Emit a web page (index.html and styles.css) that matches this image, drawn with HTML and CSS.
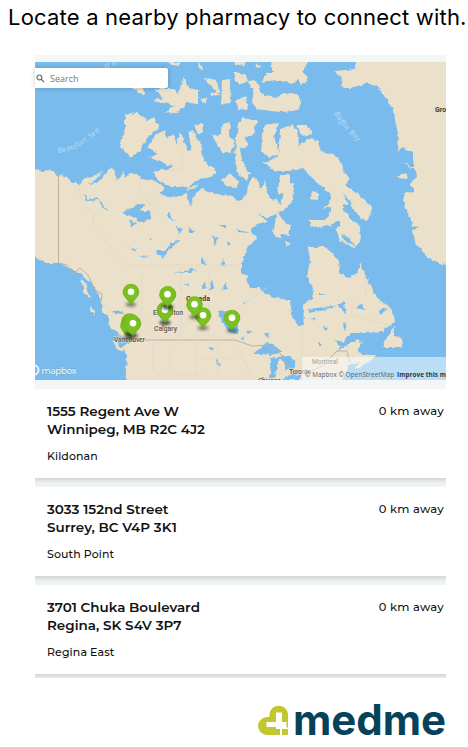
FILE: index.html
```html
<!DOCTYPE html>
<html lang="en">
<head>
<meta charset="utf-8">
<title>Pharmacy locator</title>
<link rel="stylesheet" href="styles.css">
</head>
<body>
<h1 class="title">Locate a nearby pharmacy to connect with.</h1>
<main class="locator">
  <section class="map-panel">
    <svg class="map" viewBox="35 62 411 318" role="img" aria-label="Map of Canada">
      <defs>
        <filter id="coast" filterUnits="userSpaceOnUse" x="25" y="52" width="431" height="338">
          <feTurbulence type="fractalNoise" baseFrequency=".2" numOctaves="2" seed="8"/>
          <feDisplacementMap in="SourceGraphic" scale="4.5" xChannelSelector="R" yChannelSelector="G"/>
        </filter>
        <filter id="soft" x="-50%" y="-100%" width="200%" height="300%"><feGaussianBlur stdDeviation="1.5"/></filter>
        <radialGradient id="green" cx=".5" cy=".4" r=".65"><stop offset="0" stop-color="#83c72b"/><stop offset=".65" stop-color="#77bc20"/><stop offset="1" stop-color="#529817"/></radialGradient>
        <g id="pin">
          <ellipse class="pin-shadow" cx="0" cy="12" rx="5.5" ry="2.2"/>
          <path fill="url(#green)" d="M0 13C-1 9 -8.300 5 -8.300 -.5A8.300 8.300 0 0 1 8.300 -.5C8.300 5 1 9 0 13Z"/>
          <circle cy="-.7" r="3.3" fill="#fff"/>
        </g>
      </defs>
      <rect class="water" x="35" y="62" width="411" height="318"/>
      <g filter="url(#coast)">
        <g class="land">
          <path d="M25 169L43 171 50 169 58 175 66 176 72 182 80 185 82 179 91 177 104 171 97 178 89 184 98 182 105 174 112 166 115 175 118 179 122 177 123 170 125 178 130 173 138 175 142 179 155 181 164 187 160 195 177 197 187 193 190 207 193 197 202 188 210 193 230 196 239 201 245 197 249 183 253 177 259 182 260 190 265 180 268 193 272 202 277 197 280 175 290 175 290 183 294 185 293 200 287 208 278 213 268 218 257 213 267 221 255 225 251 232 257 238 248 247 242 262 242 272 247 277 250 288 258 287 270 296 290 301 291 315 300 327 304 325 303 305 312 298 314 288 307 277 310 260 308 247 325 247 332 253 339 260 340 273 350 278 357 273 360 263 367 278 372 290 382 302 393 310 395 322 382 331 368 333 352 333 342 343 337 352 345 346 358 339 362 343 357 350 362 355 377 355 368 362 358 369 355 367 360 362 350 364 345 373 338 390 125 390 127 353 122 347 130 343 110 327 108 317 102 310 100 297 90 282 80 273 72 270 60 263 45 263 35 257 25 250Z"/>
          <path d="M356 50L355 69 335 71 343 78 341 86 350 88 367 83 378 87 387 100 394 112 395 120 398 133 397 153 402 147 412 152 414 167 402 162 416 170 417 177 410 183 415 192 405 193 403 200 407 210 412 223 415 242 427 257 442 265 456 260 456 50Z"/>
          <path d="M125 115L137 113 147 120 155 118 159 127 147 138 140 152 130 157 120 147 125 130Z"/>
          <path d="M147 147L157 134 165 130 167 138 173 134 177 144 180 130 188 151 192 150 188 132 194 131 202 147 203 160 217 172 210 177 200 179 187 187 170 187 157 180 154 172 174 167 150 158 158 153Z"/>
          <path d="M194 125L202 124 203 132 198 134ZM211 134L219 137 223 124 230 122 229 135 235 143 230 153 222 152 217 144Z"/>
          <path d="M152 101L163 98 155 89 173 88 178 94 184 76 189 88 198 90 198 104 188 103 176 113 165 112 174 105ZM131 87L145 96 142 88 159 83 151 76 140 76ZM168 62H180L179 66 172 65ZM198 61L203 70 199 69ZM204 78L220 96 217 80ZM201 100L206 105 206 97ZM222 80L230 79 231 103 221 104ZM210 93L218 92 219 95 212 96Z"/>
          <path d="M235 72L245 74 248 81 240 85 235 80ZM236 100L246 97 248 109 237 110ZM234 60H247L244 66 235 64ZM256 62L260 67 257 68ZM270 60H308L306 66 302 71 308 77 302 85 298 80 295 84 286 82 276 80 261 82 267 72 274 72Z"/>
          <path d="M248 81L256 80 261 94 276 98 285 93 298 94 301 103 298 110 283 112 270 111 257 109 251 101 253 91Z"/>
          <path d="M238 122L244 118 257 121 253 135 245 138 248 146 240 149 242 160 250 173 247 180 238 174 235 160 236 140Z"/>
          <path d="M265 125L279 123 274 136 279 154 269 158 261 151 262 138ZM297 125L307 125 313 134 302 136Z"/>
          <path d="M263 162L271 160 278 157 279 147 280 130 292 124 297 131 299 145 307 139 317 140 321 151 333 154 341 162 344 170 349 180 345 184 362 197 373 208 368 218 361 219 351 207 350 202 343 205 343 215 329 207 322 209 330 203 331 195 315 181 303 168 289 171 275 171Z"/>
          <path d="M312 191L318 192 318 200 310 199ZM277 212L284 221 291 226 289 235 282 234 280 239 273 234ZM285 242L291 243 287 247ZM308 220L326 220 332 209 345 210 350 218 360 226 361 239 355 248 340 241 335 227 324 226 313 228Z"/>
          <path d="M222 181L230 173 238 180 237 188 225 185ZM185 189L199 184 193 190ZM357 205L370 204 367 221 361 218ZM394 326L394 336 402 338 403 347 382 347 389 335Z"/>
          <path d="M80 277L87 285 90 299 84 292ZM92 306L95 316 90 310ZM112 340L124 349 119 351ZM397 176L405 173 408 178 402 180Z"/>
        </g>
        <g class="lakes">
          <path d="M122 213L135 205 145 204 140 211 150 211 151 219 140 222 134 217ZM128 219L136 223 133 227ZM155 251L165 251 171 243 182 240 169 249 163 258ZM127 247L135 249 138 252ZM139 255L151 256 142 257ZM149 237L153 240 150 240ZM172 275L190 269 198 271 180 273ZM169 212L174 221 167 216ZM177 227L183 229 178 234ZM190 227L194 233 188 233ZM213 235L218 239 214 246ZM227 241L232 245 228 246Z"/>
          <path d="M203 256L206 266 202 263ZM212 279L214 288 208 291ZM222 259L226 267 221 266ZM204 281L207 288 203 289ZM226 282L228 289 222 290ZM217 312L227 311 229 319 238 321 238 334 229 332 223 323ZM112 311L122 311 123 314 114 313ZM208 347L214 348 212 351ZM217 359L221 364 218 367ZM187 282L189 286 184 285ZM219 225L226 225 226 229Z"/>
          <path d="M253 354L267 342 282 351 272 355 260 354ZM271 358L280 357 277 366 274 379H270ZM277 357L292 356 296 367 286 370 284 362ZM282 380L294 372 299 374 287 381ZM290 379L301 374 300 379ZM240 339L244 337 243 342ZM246 330L253 333 248 334ZM264 334L269 334 268 338ZM308 309L325 307 326 310 309 313ZM320 307L335 306 331 309ZM337 305L344 302 346 315 341 309ZM356 308L361 304 365 310ZM343 322L347 325 344 331ZM323 326L328 327 325 331ZM319 342L322 345 318 346ZM335 340L344 342 339 346ZM319 292L325 295 319 295ZM378 311L389 307 380 314ZM312 318L316 318 313 321ZM241 303L246 302 243 305Z"/>
          <path d="M331 224L338 220 341 226 336 229ZM342 233L350 239 356 246 344 240ZM325 230L331 229 330 232ZM274 196L284 193 281 205ZM235 229L247 232 250 233 239 232ZM343 193L355 206 347 202ZM411 226L418 227 414 230ZM163 190L184 192 180 196 164 194Z"/>
          <path class="stream" d="M85 194L87 200H93L98 199 103 207 108 210"/>
        </g>
      </g>
      <g class="borders">
        <path class="line" d="M58.500 176V263L67 265 73 274 80 268 88 275 95 290 102 294 101 302M129 340H235L252 346 268 345 280 353 286 363 292 373 312 371 323 365 328 363M323 365L337 351H347L350 363"/>
        <path class="faint" d="M78 185L83 205 94 213 93 224 108 245 128 265H240M140 180V196L160 211M142 266V315L158 340M181 267V340M209 267V340M235 310L268 287M302 326V366M182 135V170L162 171M352 300V315L392 326M364 270L366 296M153 340V370L170 380M196 340V380M218 340V380M196 358H235M170 350V374H205M240 351L253 380"/>
      </g>
      <g class="sea-label">
        <path id="beaufort" fill="none" d="M58 153C72 151 88 144 103 127"/>
        <path id="baffin" fill="none" d="M334 113Q342 129 362 145"/>
        <text font-size="7.2"><textPath href="#beaufort" textLength="48">Beaufort Sea</textPath></text>
        <text font-size="7.5"><textPath href="#baffin" textLength="38">Baffin Bay</textPath></text>
        <text font-size="9" transform="translate(105 69) rotate(-18)" letter-spacing="3">an</text>
      </g>
      <g class="place">
        <text x="435" y="112" class="region">Gro</text>
        <text x="186" y="301" class="region" textLength="24">Canada</text>
        <text x="153" y="315" textLength="30">Edmonton</text>
        <text x="154" y="331" textLength="23">Calgary</text>
        <text x="114" y="342" textLength="31">Vancouver</text>
        <text x="312" y="364" textLength="26">Montreal</text>
        <text x="289" y="374" textLength="22">Toronto</text>
        <text x="258" y="383" textLength="23">Chicago</text>
      </g>
      <g>
        <use href="#pin" x="131" y="292.500"/><use href="#pin" x="165" y="311"/><use href="#pin" x="165" y="310.500"/><use href="#pin" x="168" y="295"/><use href="#pin" x="167.500" y="295"/>
        <use href="#pin" x="203" y="316"/><use href="#pin" x="194.500" y="305"/><use href="#pin" x="232" y="318.500"/>
        <use href="#pin" x="128.500" y="326"/><use href="#pin" x="129.500" y="322"/><use href="#pin" x="131" y="322.500"/><use href="#pin" x="133" y="324"/>
      </g>
      <g class="mapbox">
        <circle cx="34" cy="370" r="4.500"/><text x="41" y="373.500" textLength="36">mapbox</text>
      </g>
      <rect x="302" y="357" width="144" height="23" fill="#fff" opacity=".5"/>
      <g class="credit">
        <text x="305" y="377" textLength="89">© Mapbox © OpenStreetMap</text>
        <text x="397" y="377" textLength="49" class="improve">Improve this m</text>
      </g>
    </svg>
    <label class="search">
      <svg class="search-icon" viewBox="0 0 10 10"><circle cx="3.800" cy="3.800" r="2.700"/><path d="M5.800 5.800L9 9"/></svg>
      <span>Search</span>
    </label>
  </section>
  <article class="card">
    <div><h2 class="address">1555 Regent Ave W<br>Winnipeg, MB R2C 4J2</h2><p class="branch">Kildonan</p></div>
    <span class="distance">0 km away</span>
  </article>
  <article class="card">
    <div><h2 class="address">3033 152nd Street<br>Surrey, BC V4P 3K1</h2><p class="branch">South Point</p></div>
    <span class="distance">0 km away</span>
  </article>
  <article class="card last">
    <div><h2 class="address">3701 Chuka Boulevard<br>Regina, SK S4V 3P7</h2><p class="branch">Regina East</p></div>
    <span class="distance">0 km away</span>
  </article>
  <footer class="brand">
    <svg class="logo" viewBox="258 700 188 40" role="img" aria-label="medme">
      <path class="mark" d="M280 735H267A9 9 0 0 1 267 717H269.500V714A9.300 9.300 0 0 1 288 714V735H280Z"/>
      <path class="cross" d="M276 712.500H282V722H286.500V727.500H289V729H282V736H280V729H276V727H266.500V722H276Z"/>
      <text x="293" y="735" textLength="153">medme</text>
    </svg>
  </footer>
</main>
</body>
</html>
```
FILE: styles.css
```css
* { box-sizing: border-box; }
body { margin: 0; width: 468px; height: 747px; overflow: hidden; background: #fff; color: #111; font-family: Montserrat, Inter, sans-serif; }
.title { margin: 0; padding: 5px 0 0 8px; height: 55px; font: 400 22px/25px Inter, sans-serif; letter-spacing: .2px; color: #000; white-space: nowrap; }
.locator { width: 411px; margin-left: 35px; }
.map-panel { position: relative; padding: 7px 0 9px; background: #f2f6f7; }
.map { display: block; width: 411px; height: 318px; font-family: "Open Sans", sans-serif; }
.water { fill: #78bbec; }
.land { fill: #ebe1ca; }
.lakes { fill: #78bbec; }
.stream { fill: none; stroke: #78bbec; stroke-width: 1.3; }
.line { fill: none; stroke: #bdb1a5; stroke-width: 1; }
.faint { fill: none; stroke: #ddd3c3; stroke-width: .6; }
.sea-label { fill: #c0def4; font-style: italic; }
.place { font: 500 6.8px Roboto, sans-serif; fill: #55514d; stroke: #f2eadb; stroke-width: .8px; paint-order: stroke; }
.region { font-weight: 700; font-size: 7px; fill: #383634; }
.pin-shadow { fill: #222; opacity: .55; filter: url(#soft); }
.mapbox { font: 600 9.5px Montserrat, Inter, sans-serif; fill: #d9ebf6; stroke: #6d98b2; stroke-width: .6px; paint-order: stroke; }
.mapbox circle { fill: none; stroke: #e7f2f9; stroke-width: 2; }
.credit { font-size: 6.3px; fill: #55616b; }
.improve { font-weight: 700; fill: #293743; }
.search { position: absolute; left: 0; top: 13px; width: 133px; height: 20px; display: flex; align-items: center; gap: 5px; background: #fff; border-radius: 0 2px 2px 0; box-shadow: 0 0 5px rgba(0,0,0,.22); color: #777; font: 9px "Open Sans", sans-serif; }
.search-icon { width: 9px; height: 9px; margin-left: 1px; fill: none; stroke: #666; stroke-width: 1.3; }
.card { display: flex; justify-content: space-between; height: 98px; padding: 13px 2px 0 12px; background: linear-gradient(#fff 89px, #d2d6d7 89px, #dce0e1 91px, #edf1f2 94px, #f0f4f5 98px); }
.card.last { height: 93px; }
.address { margin: 0; font-size: 13.5px; line-height: 18px; font-weight: 600; letter-spacing: 0; white-space: nowrap; }
.branch { margin: 11px 0 0; font-size: 11px; line-height: 14px; font-weight: 500; letter-spacing: .1px; }
.distance { font-size: 11.5px; line-height: 18px; font-weight: 500; letter-spacing: .25px; white-space: nowrap; }
.brand { display: flex; justify-content: flex-end; padding-top: 22px; }
.logo { width: 188px; height: 40px; }
.logo text { font: 700 42px Inter, sans-serif; fill: #06425a; }
.mark { fill: #c1c72e; }
.cross { fill: #fff; }
```
